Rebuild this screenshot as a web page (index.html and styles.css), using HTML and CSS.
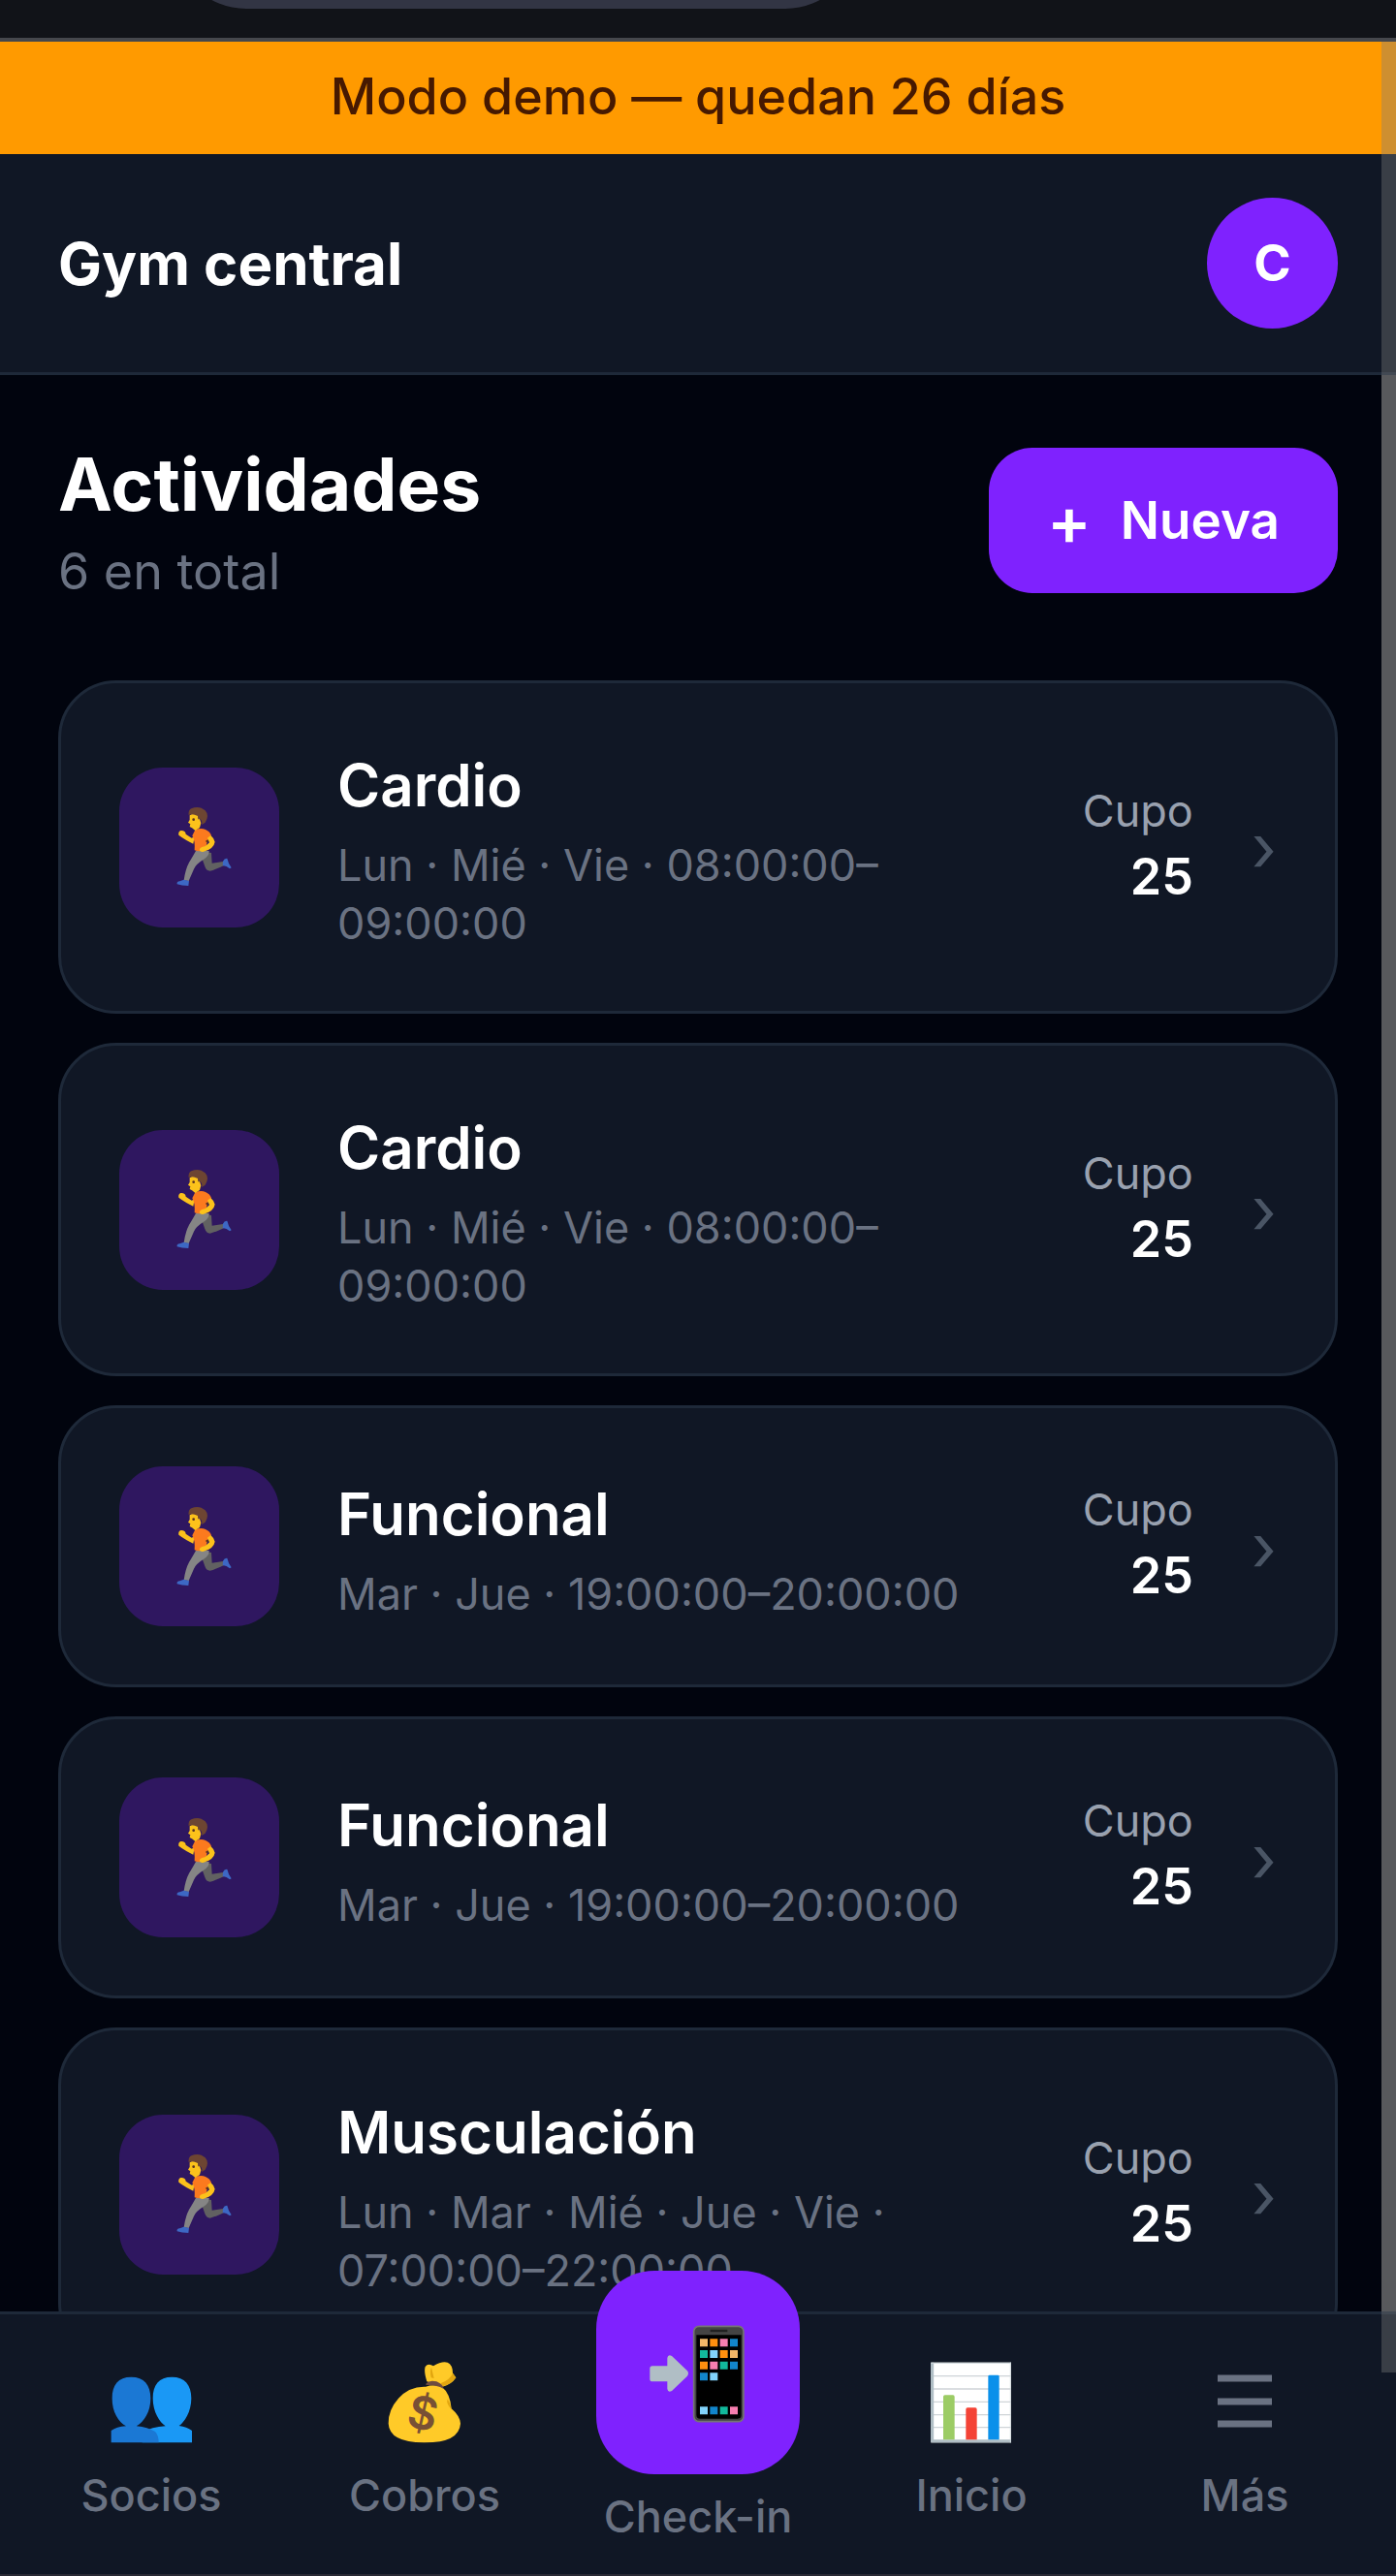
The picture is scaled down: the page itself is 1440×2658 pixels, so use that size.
FILE: index.html
```html
<!DOCTYPE html>
<html lang="es">
<head>
    <meta charset="UTF-8">
    <meta name="viewport" content="width=device-width, initial-scale=1.0">
    <title>Actividades - Gym central</title>
    <link rel="stylesheet" href="styles.css">
</head>
<body>
    <svg class="sprite" aria-hidden="true">
        <symbol id="runner" viewBox="126 156 252 252">
            <path d="M262 296 L288 300 L290 332 L324 327 L329 338 Q300 352 284 356 Q272 356 268 342 L258 314 Z" fill="#616161"/>
            <path d="M240 294 L281 294 Q282 310 262 322 Q242 334 234 350 L218 387 L203 385 Q208 350 219 330 Q230 312 240 294 Z" fill="#858585"/>
            <path d="M324 326 Q328 316 337 317 Q340 332 350 346 L345 349 Q332 338 323 340 Z" fill="#3d68c4"/>
            <path d="M203 383 L219 387 L217 402 Q196 402 182 397 Q180 389 190 388 Z" fill="#3d68c4"/>
            <path d="M236 250 L232 272 L212 262 Q196 252 187 245 Q185 235 193 231 Q208 230 209 242 L227 254 Z" fill="#fcc21b"/>
            <path d="M238 229 Q256 222 270 228 Q284 234 288 246 L277 260 L268 292 Q250 298 236 292 Q238 262 229 247 Z" fill="#fb7a1e"/>
            <path d="M276 254 L286 246 Q296 254 299 266 Q296 288 262 297 Q254 298 251 291 Q253 282 268 280 Q276 274 282 268 Z" fill="#fcc21b"/>
            <circle cx="275" cy="264" r="4" fill="#5d3320"/>
            <path d="M221 184 Q230 176 248 182 L256 208 L252 222 L238 231 Q229 222 221 219 L223 211 L216 206 L221 198 Z" fill="#fcc21b"/>
            <path d="M218 183 Q216 168 226 163 Q250 152 269 169 Q283 184 269 206 L258 213 Q262 200 252 194 Q246 202 246 186 Q230 178 218 183 Z" fill="#6d4532"/>
            <circle cx="233" cy="197" r="4" fill="#5d3320"/>
        </symbol>
    </svg>

    <!-- Browser bar -->
    <div class="browser-bar">
        <div class="address-pill"></div>
    </div>

    <div class="app">
        <div class="demo-banner">Modo demo — quedan 26 días</div>

        <header class="topbar">
            <strong class="gym-name">Gym central</strong>
            <button class="avatar" aria-label="Cuenta">C</button>
        </header>

        <main class="content">
            <div class="page-head">
                <div>
                    <h1>Actividades</h1>
                    <p class="total">6 en total</p>
                </div>
                <button class="btn-new"><span class="plus">+</span>Nueva</button>
            </div>

            <div class="activity-list">
                <a href="#" class="card">
                    <span class="card-icon"><svg><use href="#runner"/></svg></span>
                    <span class="card-info">
                        <span class="name">Cardio</span>
                        <span class="schedule">Lun · Mié · Vie · 08:00:00–09:00:00</span>
                    </span>
                    <span class="quota">Cupo <b>25</b></span>
                    <span class="chevron">›</span>
                </a>
                <a href="#" class="card">
                    <span class="card-icon"><svg><use href="#runner"/></svg></span>
                    <span class="card-info">
                        <span class="name">Cardio</span>
                        <span class="schedule">Lun · Mié · Vie · 08:00:00–09:00:00</span>
                    </span>
                    <span class="quota">Cupo <b>25</b></span>
                    <span class="chevron">›</span>
                </a>
                <a href="#" class="card">
                    <span class="card-icon"><svg><use href="#runner"/></svg></span>
                    <span class="card-info">
                        <span class="name">Funcional</span>
                        <span class="schedule">Mar · Jue · 19:00:00–20:00:00</span>
                    </span>
                    <span class="quota">Cupo <b>25</b></span>
                    <span class="chevron">›</span>
                </a>
                <a href="#" class="card">
                    <span class="card-icon"><svg><use href="#runner"/></svg></span>
                    <span class="card-info">
                        <span class="name">Funcional</span>
                        <span class="schedule">Mar · Jue · 19:00:00–20:00:00</span>
                    </span>
                    <span class="quota">Cupo <b>25</b></span>
                    <span class="chevron">›</span>
                </a>
                <a href="#" class="card">
                    <span class="card-icon"><svg><use href="#runner"/></svg></span>
                    <span class="card-info">
                        <span class="name">Musculación</span>
                        <span class="schedule">Lun · Mar · Mié · Jue · Vie · 07:00:00–22:00:00</span>
                    </span>
                    <span class="quota">Cupo <b>25</b></span>
                    <span class="chevron">›</span>
                </a>
            </div>
        </main>

        <!-- Bottom navigation -->
        <nav class="bottom-nav">
            <a href="#" class="nav-item">
                <svg class="nav-icon" viewBox="22 21 252 252">
                    <path d="M212 68 C252 68 272 92 272 134 C272 176 250 208 234 219 Q258 222 274 234 V271 H120 V240 Q150 222 192 220 C174 208 153 176 153 134 C153 92 172 68 212 68 Z" fill="#1a98f5"/>
                    <path d="M86 68 C126 68 146 92 146 134 C146 176 126 206 102 220 Q138 224 160 237 Q171 248 171 271 H24 V234 Q40 222 70 220 C46 206 27 176 27 134 C27 92 46 68 86 68 Z" fill="#1b78d4"/>
                </svg>
                <span>Socios</span>
            </a>
            <a href="#" class="nav-item">
                <svg class="nav-icon" viewBox="17 21 252 252">
                    <path d="M150 82 Q140 50 145 36 Q154 24 170 34 Q196 18 214 23 Q230 30 230 56 L240 70 Q226 92 198 98 Z" fill="#ffca28"/>
                    <path d="M230 56 L240 70 Q226 90 200 97 L192 88 Q222 76 230 56 Z M164 38 L172 72 L163 70 Q158 50 164 38 Z" fill="#e2a610"/>
                    <path d="M146 98 Q96 96 62 134 Q30 170 31 212 Q34 270 140 271 Q250 272 254 212 Q252 188 226 166 Q222 118 196 98 Q172 90 146 98 Z" fill="#ffca28"/>
                    <path d="M148 88 Q158 76 180 82 Q202 92 201 104 Q178 91 147 93 Z" fill="#6d4c41"/>
                    <path d="M214 136 Q208 150 226 168 Q222 148 214 136 Z" fill="#e2a610"/>
                    <text x="138" y="230" class="coin-sign" transform="rotate(13 138 180)">$</text>
                </svg>
                <span>Cobros</span>
            </a>
            <a href="#" class="nav-item nav-main">
                <span class="checkin">
                    <svg viewBox="317 221 324 324">
                        <path d="M338 363 H384 V338 Q386 326 398 332 L446 378 Q452 386 446 394 L398 440 Q386 446 384 434 V411 H338 Q330 411 330 403 V371 Q330 363 338 363 Z" fill="#b0bec5"/>
                        <rect x="466" y="240" width="154" height="295" rx="16" fill="#444" stroke="#757575" stroke-width="5"/>
                        <path d="M517 254 H570" stroke="#212121" stroke-width="7"/>
                        <path d="M474 267 H613 V514 Q613 526 601 526 H486 Q474 526 474 514 Z" fill="#000"/>
                        <path d="M485 279h24v24h-24z M578 314h24v24h-24z" fill="#f3b768"/>
                        <path d="M516 279h24v24h-24z M547 314h24v24h-24z M485 349h24v24h-24z" fill="#ff8f0f"/>
                        <path d="M547 279h24v24h-24z M516 349h24v24h-24z M578 489h24v24h-24z" fill="#f77fb0"/>
                        <path d="M578 279h24v24h-24z M578 349h24v24h-24z M485 384h24v24h-24z M516 489h24v24h-24z" fill="#1285cb"/>
                        <path d="M485 314h24v24h-24z M547 349h24v24h-24z M547 489h24v24h-24z" fill="#12b99c"/>
                        <path d="M516 314h24v24h-24z M516 384h24v24h-24z M485 489h24v24h-24z" fill="#82d3fb"/>
                    </svg>
                </span>
                <span>Check-in</span>
            </a>
            <a href="#" class="nav-item">
                <svg class="nav-icon" viewBox="27 21 252 252">
                    <rect x="28" y="23" width="248" height="248" fill="#fff"/>
                    <path d="M28 65H276 M28 105H276 M28 145H276 M28 185H276 M28 224H276" stroke="#cfd4d8" stroke-width="4"/>
                    <path d="M32 23V271 M28 266H276" stroke="#b0bec5" stroke-width="9"/>
                    <path d="M28 25H276 M274 23V271" stroke="#cfd8dc" stroke-width="3"/>
                    <path d="M66 262V129q0-5 5-5h25q5 0 5 5V262z" fill="#9ccc65"/>
                    <path d="M136 262V168q0-5 5-5h24q5 0 5 5V262z" fill="#f44336"/>
                    <path d="M205 262V66q0-4 4-4h26q4 0 4 4V262z" fill="#0a90ea"/>
                </svg>
                <span>Inicio</span>
            </a>
            <a href="#" class="nav-item">
                <svg class="nav-icon" viewBox="0 0 84 84">
                    <path d="M14 17H70 M14 41H70 M14 64H70" stroke="#6a7282" stroke-width="7"/>
                </svg>
                <span>Más</span>
            </a>
        </nav>
        <div class="scroll-thumb"></div>
    </div>
</body>
</html>
```

FILE: styles.css
```css
* {
    box-sizing: border-box;
    margin: 0;
    padding: 0;
}

body {
    display: flex;
    flex-direction: column;
    height: 100vh;
    overflow: hidden;
    font-family: Inter, 'Liberation Sans', sans-serif;
    font-size: 45px;
    line-height: 60px;
    background: #01040e;
    color: #fff;
}

button {
    border: none;
    background: #7f22fe;
    color: white;
    font-family: inherit;
    cursor: pointer;
}

a {
    color: inherit;
    text-decoration: none;
}

.sprite {
    display: none;
}

/* Browser bar */
.browser-bar {
    flex: none;
    height: 43px;
    overflow: hidden;
    background: #111318;
    border-bottom: 4px solid #45474c;
}

.address-pill {
    width: 49%;
    height: 150px;
    margin: -141px 0 0 179px;
    border-radius: 75px;
    background: #323544;
}

.app {
    position: relative;
    flex: 1;
    min-height: 0;
    display: flex;
    flex-direction: column;
    border-bottom: 2px solid #2a2a35;
}

.demo-banner {
    flex: none;
    padding: 19px 60px 22px;
    background: #ff9a00;
    color: #461901;
    font-size: 52px;
    font-weight: 500;
    line-height: 75px;
    text-align: center;
}

.topbar {
    flex: none;
    display: flex;
    align-items: center;
    justify-content: space-between;
    padding: 45px 60px;
    background: #101725;
    border-bottom: 3px solid #1e2939;
}

.gym-name {
    font-size: 60px;
    font-weight: 700;
    line-height: 90px;
}

.avatar {
    width: 135px;
    height: 135px;
    border-radius: 50%;
    font-size: 52px;
    font-weight: 700;
}

/* Activities */
.content {
    position: relative;
    flex: 1;
    min-height: 0;
    overflow: hidden;
    padding: 60px;
}

.content::after {
    content: '';
    position: absolute;
    top: 0;
    right: 0;
    bottom: 0;
    width: 15px;
    background: #424347;
}

.page-head {
    display: flex;
    align-items: center;
    justify-content: space-between;
    margin-bottom: 75px;
}

h1 {
    font-size: 75px;
    font-weight: 700;
    line-height: 105px;
}

.total {
    color: #6a7282;
    font-size: 52px;
    line-height: 75px;
}

.btn-new {
    display: flex;
    align-items: center;
    gap: 30px;
    height: 150px;
    padding: 0 60px;
    border-radius: 45px;
    font-size: 53px;
    font-weight: 600;
}

.plus {
    font-size: 68px;
}

.activity-list {
    display: flex;
    flex-direction: column;
    gap: 30px;
}

.card {
    display: flex;
    align-items: center;
    gap: 60px;
    padding: 60px;
    background: #101725;
    border: 3px solid #1e2939;
    border-radius: 60px;
}

.card-icon {
    flex: none;
    display: grid;
    place-items: center;
    width: 165px;
    height: 165px;
    border-radius: 45px;
    background: #2f1760;
}

.card-icon svg {
    width: 84px;
    height: 84px;
}

.card-info {
    flex: 1;
    min-width: 0;
    display: flex;
    flex-direction: column;
    gap: 8px;
}

.name {
    font-size: 60px;
    font-weight: 600;
    line-height: 90px;
}

.schedule {
    color: #6a7282;
}

.quota {
    color: #99a1af;
    text-align: right;
}

.quota b {
    display: block;
    color: white;
    font-size: 52px;
    font-weight: 600;
    line-height: 75px;
}

.chevron {
    color: #4a5565;
    font-size: 68px;
}

/* Bottom navigation */
.bottom-nav {
    position: relative;
    flex: none;
    display: grid;
    grid-template-columns: repeat(5, 1fr);
    padding: 0 15px 29px;
    background: #101725;
    border-top: 3px solid #1e2939;
}

.nav-item {
    display: flex;
    flex-direction: column;
    align-items: center;
    gap: 24px;
    padding-top: 49px;
    color: #6a7282;
    font-weight: 500;
}

.nav-icon {
    width: 84px;
    height: 84px;
}

.nav-main {
    gap: 14px;
    margin-top: -45px;
    padding-top: 0;
}

.checkin {
    display: grid;
    place-items: center;
    width: 210px;
    height: 210px;
    border-radius: 60px;
    background: #7f22fe;
}

.checkin svg {
    width: 108px;
    height: 108px;
}

.coin-sign {
    fill: #795035;
    font-size: 140px;
    font-weight: 600;
    text-anchor: middle;
}

.scroll-thumb {
    position: absolute;
    top: 0;
    right: 0;
    bottom: 208px;
    width: 15px;
    background: rgba(125, 125, 125, 0.38);
}
```
